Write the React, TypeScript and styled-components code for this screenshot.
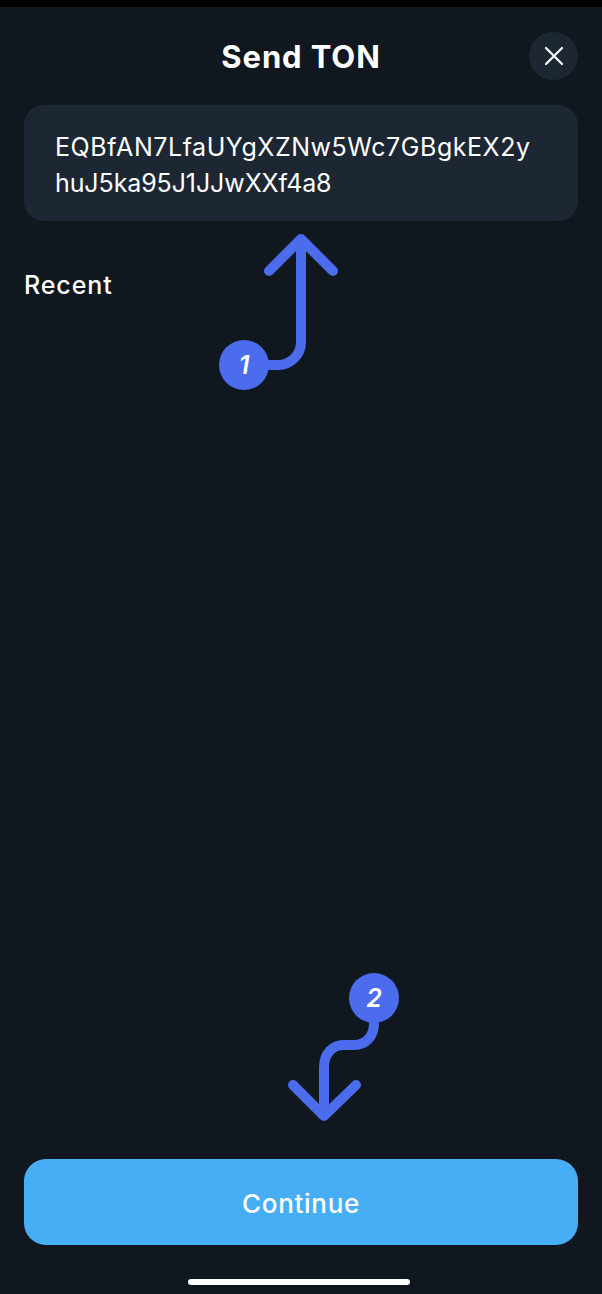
import styled, { createGlobalStyle } from 'styled-components';

const GlobalStyle = createGlobalStyle`
  html, body {
    margin: 0;
    padding: 0;
    background: #10171f;
  }
`;

const Screen = styled.div`
  position: relative;
  display: flex;
  flex-direction: column;
  width: 602px;
  height: 1294px;
  overflow: hidden;
  background: #10171f;
  color: #fff;
  font-family: Inter, "Open Sans", sans-serif;
`;

const StatusStrip = styled.div`
  height: 7px;
  background: #000;
`;

const Header = styled.header`
  display: flex;
  align-items: center;
  justify-content: center;
  position: relative;
  height: 48px;
  margin-top: 25px;
`;

const Title = styled.h1`
  margin: 2px 0 0;
  font-size: 31px;
  font-weight: 700;
  line-height: 48px;
  letter-spacing: 0.9px;
`;

const CloseButton = styled.button`
  position: absolute;
  top: 0;
  right: 24px;
  display: flex;
  align-items: center;
  justify-content: center;
  width: 49px;
  height: 48px;
  padding: 0;
  border: 0;
  border-radius: 50%;
  background: #1d2733;
  color: #fff;
`;

const AddressField = styled.div`
  margin: 25px 24px 0;
  height: 116px;
  padding: 24px 31px;
  box-sizing: border-box;
  border-radius: 20px;
  background: #1d2733;
  font-size: 25px;
  line-height: 36px;
`;

const AddressLine = styled.div<{ $tracking: number }>`
  letter-spacing: ${(p) => p.$tracking}px;
  white-space: nowrap;
`;

const SectionLabel = styled.h2`
  margin: 48px 24px 0;
  font-size: 25px;
  font-weight: 500;
  line-height: 32px;
  letter-spacing: 0.9px;
`;

const Spacer = styled.div`
  flex: 1;
`;

const ContinueButton = styled.button`
  height: 86px;
  margin: 0 24px;
  padding: 2px 0 0;
  border: 0;
  border-radius: 22px;
  background: #47aef5;
  color: #fff;
  font-family: inherit;
  font-size: 26px;
  font-weight: 500;
  letter-spacing: 0.7px;
`;

const HomeIndicator = styled.div`
  align-self: center;
  width: 222px;
  height: 6px;
  margin: 34px 0 9px -4px;
  border-radius: 3px;
  background: #fff;
`;

const Overlay = styled.svg`
  position: absolute;
  top: 0;
  left: 0;
  pointer-events: none;
`;

const StepBadge = styled.div<{ $x: number; $y: number }>`
  position: absolute;
  left: ${(p) => p.$x}px;
  top: ${(p) => p.$y}px;
  display: flex;
  align-items: center;
  justify-content: center;
  width: 50px;
  height: 50px;
  border-radius: 50%;
  background: #4a6ced;
  font-size: 25px;
  font-weight: 600;
  font-style: italic;
`;

const App = () => (
  <>
    <GlobalStyle />
    <Screen>
      <StatusStrip />
      <Header>
        <Title>Send TON</Title>
        <CloseButton aria-label="Close">
          <svg width="20" height="20" viewBox="0 0 20 20" fill="none" stroke="currentColor" strokeWidth="2.2" strokeLinecap="round">
            <path d="M2 2l16 16M18 2L2 18" />
          </svg>
        </CloseButton>
      </Header>
      <AddressField>
        <AddressLine $tracking={0.55}>EQBfAN7LfaUYgXZNw5Wc7GBgkEX2y</AddressLine>
        <AddressLine $tracking={-0.1}>huJ5ka95J1JJwXXf4a8</AddressLine>
      </AddressField>
      <SectionLabel>Recent</SectionLabel>
      <Spacer />
      <ContinueButton>Continue</ContinueButton>
      <HomeIndicator />

      <Overlay width="602" height="1294" viewBox="0 0 602 1294" fill="none" stroke="#4a6ced" strokeWidth="10" strokeLinecap="round" strokeLinejoin="round">
        <path d="M270 365h8a23 23 0 0 0 23-23V240" />
        <path d="M269 271l32-32 32 32" />
        <path d="M374 1024c0 12-8 21-20 21h-10c-12 0-20 9-20 22v48" />
        <path d="M293 1085l31 31 32-31" />
      </Overlay>
      <StepBadge $x={219} $y={340}>1</StepBadge>
      <StepBadge $x={349} $y={973}>2</StepBadge>
    </Screen>
  </>
);

export default App;
